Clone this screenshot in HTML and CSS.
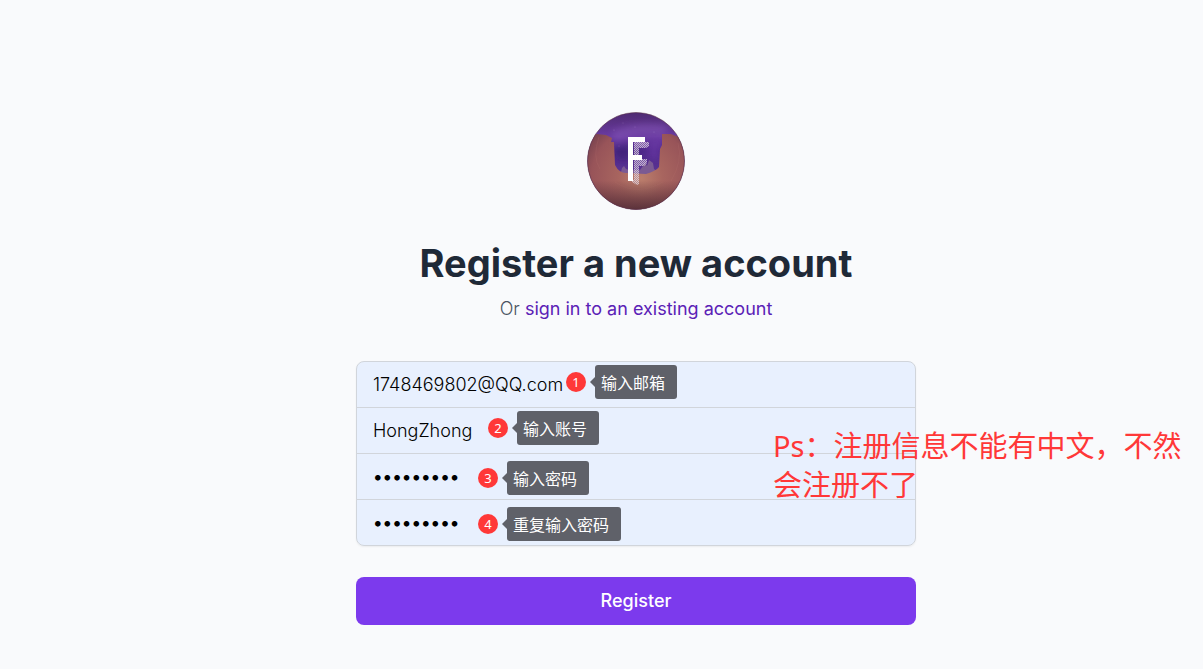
FILE: index.html
```
<!DOCTYPE html>
<html lang="en">
<head>
    <meta charset="UTF-8">
    <meta name="viewport" content="width=device-width, initial-scale=1.0">
    <title>Register</title>

    <link rel="stylesheet" href="styles.css">
</head>
<body>
    <main class="page">
        <div class="register">
            <svg class="logo" viewBox="0 0 98 98" role="img" aria-label="Logo">
                <defs>
                    <clipPath id="round"><circle cx="49" cy="49" r="48.5"/></clipPath>
                    <linearGradient id="sky" x1="0" y1="0" x2="0" y2="1">
                        <stop offset="0" stop-color="#4e2a70"/>
                        <stop offset="0.25" stop-color="#6a3ba2"/>
                        <stop offset="0.4" stop-color="#4c2788"/>
                        <stop offset="0.65" stop-color="#5e3696"/>
                    </linearGradient>
                    <radialGradient id="rock" gradientUnits="userSpaceOnUse" cx="54" cy="66" r="62">
                        <stop offset="0" stop-color="#bb7e6c"/>
                        <stop offset="0.35" stop-color="#a8655f"/>
                        <stop offset="0.8" stop-color="#985459"/>
                        <stop offset="1" stop-color="#7c4450"/>
                    </radialGradient>
                    <linearGradient id="shade" x1="0" y1="0" x2="0" y2="1">
                        <stop offset="0.7" stop-color="#42222f" stop-opacity="0"/>
                        <stop offset="1" stop-color="#42222f" stop-opacity="0.75"/>
                    </linearGradient>
                    <filter id="soft" x="-30%" y="-30%" width="160%" height="160%"><feGaussianBlur stdDeviation="3"/></filter>
                    <pattern id="dots" width="2" height="2" patternUnits="userSpaceOnUse">
                        <rect width="2" height="2" fill="#d9cbdc" opacity="0.3"/>
                        <rect width="1" height="1" fill="#e6dce8" opacity="0.65"/>
                        <rect x="1" y="1" width="1" height="1" fill="#e6dce8" opacity="0.65"/>
                    </pattern>
                </defs>
                <g clip-path="url(#round)">
                    <rect width="98" height="98" fill="url(#sky)"/>
                    <g filter="url(#soft)">
                        <path d="M25 20Q48 8 82 14L76 23Q50 20 28 30Z" fill="#8556b8" opacity="0.5"/>
                        <path d="M62 28L76 25L72 48L60 45Z" fill="#6d35a7" opacity="0.6"/>
                        <path d="M27 37L42 31L41 49L30 47Z" fill="#311b66" opacity="0.4"/>
                    </g>
                    <g fill="#d5b6ee" opacity="0.3">
                        <circle cx="27" cy="18" r="0.6"/>
                        <circle cx="36" cy="11" r="0.5"/>
                        <circle cx="48" cy="15" r="0.6"/>
                        <circle cx="67" cy="20" r="0.6"/>
                        <circle cx="32" cy="34" r="0.5"/>
                    </g>
                    <path d="M34 60L35 56L37 54L39 57L42 58H53L56 54L58 50L60 54L62 48L66 51L67 57L71 60L62 68H36Z" fill="#7b5a93"/>
                    <path d="M-2 25L10 22L19 23L25 26L24 30L27 30L28 53Q32 61 39 61L59 62Q69 59 72 55L73 37L75 33L75 22H84L89 24L100 27V100H-2Z" fill="url(#rock)"/>
                    <path d="M12 25Q5 45 13 57M91 31Q96 49 84 69M28 70Q50 85 76 70" fill="none" stroke="#c17d76" stroke-width="1" opacity="0.15"/>
                    <rect width="98" height="98" fill="url(#shade)"/>
                    <path d="M47 30H62V34L59 36H52V47H60V51L57 54H52V72L50 73L45 70V68H47Z" fill="url(#dots)"/>
                    <rect x="41" y="25" width="5" height="44" fill="#fff"/>
                    <rect x="41" y="25" width="17" height="5" fill="#fff"/>
                    <rect x="41" y="43" width="14" height="5" fill="#fff"/>
                </g>
                <circle cx="49" cy="49" r="48.5" fill="none" stroke="#593245" opacity="0.55"/>
            </svg>

            <h1>Register a new account</h1>
            <p class="signin">Or <a href="#">sign in to an existing account</a></p>

            <form>
                <div class="fields">
                    <div class="field">
                        <input type="text" aria-label="Email" value="1748469802@QQ.com">
                        <div class="tip tip_email"><span class="badge">1</span><span class="bubble">输入邮箱</span></div>
                    </div>
                    <div class="field">
                        <input type="text" aria-label="Username" value="HongZhong">
                        <div class="tip tip_name"><span class="badge">2</span><span class="bubble">输入账号</span></div>
                    </div>
                    <div class="field">
                        <input type="password" aria-label="Password" value="password1">
                        <div class="tip tip_password"><span class="badge">3</span><span class="bubble">输入密码</span></div>
                    </div>
                    <div class="field">
                        <input type="password" aria-label="Repeat password" value="password1">
                        <div class="tip tip_password"><span class="badge">4</span><span class="bubble">重复输入密码</span></div>
                    </div>
                    <p class="note">Ps：注册信息不能有中文，不然会注册不了</p>
                </div>
                <button type="button">Register</button>
            </form>
        </div>
    </main>
</body>
</html>
```
FILE: styles.css
```
*
{
    box-sizing: border-box;
}

body
{
    margin: 0;
    min-height: 100vh;
    background-color: #f9fafc;
    color: #1f2937;
    font-family: Inter, "Noto Sans CJK SC", sans-serif;
    font-size: 18px;
    line-height: 24px;
    overflow-x: hidden;
}

.page
{
    display: flex;
    justify-content: center;
    padding: 112px 0 40px 69px;
}

.register
{
    width: 100%;
    max-width: 560px;
}

.logo
{
    display: block;
    width: 98px;
    height: 98px;
    margin: 0 auto;
}

h1
{
    margin: 30px 0 0;
    font-size: 38px;
    font-weight: 700;
    line-height: 46px;
    text-align: center;
}

.signin
{
    margin: 11px 0 40px;
    color: #4b5563;
    font-weight: 300;
    text-align: center;
}

.signin a
{
    color: #5b21b6;
    font-weight: 400;
    text-decoration: none;
}

.fields
{
    position: relative;
    border-radius: 8px;
    box-shadow: 0 1px 2px rgba(0, 0, 0, 0.06);
}

.field
{
    position: relative;
}

.field + .field
{
    margin-top: -1px;
}

.field input
{
    display: block;
    width: 100%;
    height: 47px;
    padding: 0 16px;
    border: 1px solid #d1d5db;
    border-radius: 0;
    outline: none;
    background-color: #e8f0fe;
    color: #000;
    font: inherit;
    font-weight: 300;
}

.field input[type="password"]
{
    font-weight: 500;
}

.field:first-child input
{
    border-radius: 8px 8px 0 0;
}

.field:nth-child(4) input
{
    border-radius: 0 0 8px 8px;
}

/* numbered hints on top of the inputs */
.tip
{
    position: absolute;
    top: 4px;
    display: flex;
    align-items: center;
    gap: 9px;
    white-space: nowrap;
}

.tip_email
{
    left: 210px;
}

.tip_name
{
    left: 132px;
}

.tip_password
{
    top: 8px;
    left: 122px;
}

.badge
{
    width: 20px;
    height: 20px;
    border-radius: 50%;
    background-color: #ff3838;
    color: #fff;
    font-family: "Noto Sans", sans-serif;
    font-size: 13px;
    line-height: 20px;
    text-align: center;
}

.bubble
{
    position: relative;
    padding: 5px 12px 5px 6px;
    border-radius: 3px;
    background-color: #5f6169;
    color: #fff;
    font-family: "Noto Sans CJK SC", sans-serif;
    font-size: 16px;
}

.bubble::before
{
    content: "";
    position: absolute;
    top: 12px;
    left: -5px;
    border: 5px solid transparent;
    border-left: 0;
    border-right-color: #5f6169;
}

.note
{
    position: absolute;
    top: 65px;
    left: 417px;
    width: 420px;
    margin: 0;
    color: #ff3838;
    font-family: "Noto Sans", "Noto Sans CJK SC", sans-serif;
    font-size: 29px;
    line-height: 39px;
}

button
{
    display: block;
    width: 100%;
    height: 48px;
    margin-top: 31px;
    border: 0;
    border-radius: 8px;
    background-color: #7c3aed;
    color: #fff;
    font: inherit;
    font-weight: 500;
    cursor: pointer;
}
```
